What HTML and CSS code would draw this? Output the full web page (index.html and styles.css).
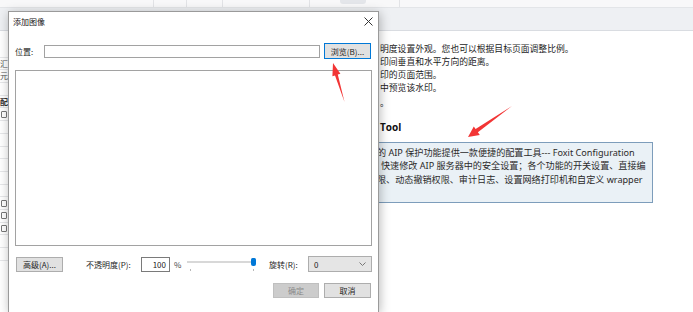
FILE: index.html
```html
<!DOCTYPE html>
<html lang="zh-CN">
<head>
    <meta charset="UTF-8">
    <meta name="viewport" content="width=device-width, initial-scale=1.0">
    <title>添加图像</title>
    <link rel="stylesheet" href="styles.css">
</head>
<body>
    <div class="app">
        <div class="topstrip">
            <span class="seg seg-a"></span>
            <span class="seg seg-b"></span>
            <span class="seg seg-c"></span>
            <span class="seg seg-d"></span>
            <span class="seg seg-e"><i class="pill"></i></span>
            <span class="seg seg-f"></span>
        </div>
        <div class="band"></div>
        <div class="workspace">
            <div class="sidepane">
                <div class="side-row"></div>
                <div class="side-row"><span class="side-glyph">汇</span></div>
                <div class="side-row"><span class="side-glyph">元…</span></div>
                <div class="side-row"></div>
                <div class="side-row"><span class="side-glyph bold">配</span></div>
                <div class="side-row"><span class="side-icon"></span></div>
                <div class="side-row"></div>
                <div class="side-row"></div>
                <div class="side-row"></div>
                <div class="side-row"></div>
                <div class="side-row"></div>
                <div class="side-row"></div>
                <div class="side-row"><span class="side-icon"></span></div>
                <div class="side-row"><span class="side-icon"></span></div>
                <div class="side-row"><span class="side-icon"></span></div>
                <div class="side-row"></div>
                <div class="side-row"></div>
            </div>
            <div class="page">
                <p class="line">明度设置外观。您也可以根据目标页面调整比例。</p>
                <p class="line">印间垂直和水平方向的距离。</p>
                <p class="line">印的页面范围。</p>
                <p class="line">中预览该水印。</p>
                <p class="line end">。</p>
                <h3 class="heading">Tool</h3>
                <div class="note">
                    <span class="note-line">的 AIP 保护功能提供一款便捷的配置工具--- Foxit Configuration</span>
                    <span class="note-line shift">快速修改 AIP 服务器中的安全设置；各个功能的开关设置、直接编</span>
                    <span class="note-line">限、动态撤销权限、审计日志、设置网络打印机和自定义 wrapper</span>
                </div>
            </div>
        </div>
    </div>

    <div class="dialog">
        <div class="dlg-title">
            <span>添加图像</span>
            <svg class="close" width="9" height="9" viewBox="0 0 9 9">
                <path d="M0.5 0.5 L8.5 8.5 M8.5 0.5 L0.5 8.5" stroke="#333" stroke-width="1" fill="none"/>
            </svg>
        </div>
        <div class="dlg-body">
            <div class="row loc-row">
                <label class="loc-label">位置:</label>
                <div class="field"></div>
                <button class="btn primary browse">浏览(B)...</button>
            </div>
            <div class="preview"></div>
            <div class="row opts-row">
                <button class="btn adv">高级(A)...</button>
                <label class="op-label">不透明度(P):</label>
                <div class="num">100</div>
                <span class="pct">%</span>
                <div class="slider">
                    <div class="track"></div>
                    <div class="thumb"></div>
                    <i class="tick tick-l"></i>
                    <i class="tick tick-r"></i>
                </div>
                <label class="rot-label">旋转(R):</label>
                <div class="select">
                    <span>0</span>
                    <svg width="7" height="4" viewBox="0 0 7 4">
                        <path d="M0.5 0.5 L3.5 3.5 L6.5 0.5" stroke="#777" stroke-width="1" fill="none"/>
                    </svg>
                </div>
            </div>
            <div class="row actions-row">
                <button class="btn disabled">确定</button>
                <button class="btn cancel">取消</button>
            </div>
        </div>
    </div>

    <svg class="marks" width="693" height="312" viewBox="0 0 693 312">
        <polygon points="344.5,102 337.8,74.6 340.4,73.8 333,63 332.4,76.2 335,75.4" fill="#f23535"/>
        <polygon points="512,106 477.9,132.3 479.8,135 468,137 473.8,126.6 475.6,129.1" fill="#f23535"/>
    </svg>
</body>
</html>
```

FILE: styles.css
```css
* {
    box-sizing: border-box;
    margin: 0;
    padding: 0;
}

body {
    width: 693px;
    height: 312px;
    overflow: hidden;
    position: relative;
    background-color: #fff;
    font-family: "Noto Sans CJK SC", "Noto Sans", sans-serif;
    color: #222;
}

/* background application */

.app {
    width: 693px;
    height: 312px;
    display: flex;
    flex-direction: column;
    overflow: hidden;
}

.topstrip {
    height: 8px;
    display: flex;
    background-color: #f8f8f9;
    border-bottom: 1px solid #e3e5e8;
}

.seg {
    height: 7px;
    border-right: 1px solid #e2e3e6;
    position: relative;
}

.seg-a { width: 154px; }
.seg-b { width: 33px; }
.seg-c { width: 36px; }
.seg-d { width: 87px; }
.seg-e { width: 90px; }
.seg-f { flex: 1; border-right: none; }

.pill {
    position: absolute;
    left: 30px;
    top: 0;
    width: 26px;
    height: 4px;
    background-color: #e4e6ea;
    border-radius: 0 0 3px 3px;
}

.band {
    height: 23px;
    background-color: #eef0f3;
    border-bottom: 1px solid #d9dce1;
}

.workspace {
    flex: 1;
    display: flex;
    overflow: hidden;
}

.sidepane {
    width: 120px;
    padding-top: 14px;
    border-right: 1px solid #e0e0e0;
}

.side-row {
    height: 12.7px;
    border-bottom: 1px solid #e6e7e9;
    display: flex;
    align-items: center;
}

.side-glyph {
    font-size: 8px;
    line-height: 1;
    color: #555;
    white-space: nowrap;
}

.side-glyph.bold {
    font-weight: bold;
    color: #333;
}

.side-icon {
    width: 6px;
    height: 7px;
    margin-left: 1px;
    border: 1px solid #777;
    border-radius: 1px;
}

.page {
    flex: 1;
    padding: 11px 0 0 260px;
    font-size: 8.8px;
    color: #1c1c1c;
}

.line {
    line-height: 13px;
    white-space: nowrap;
}

.line.end {
    margin-top: 2px;
}

.heading {
    margin-top: 11px;
    font-family: "Open Sans", "Noto Sans", sans-serif;
    font-size: 10px;
    font-weight: bold;
    line-height: 14px;
    color: #111;
}

.note {
    width: 353px;
    margin: 8px 0 0 -80px;
    padding: 2.5px 0 16px 76px;
    background-color: #eaf1f6;
    border: 1px solid #7d9dbb;
    font-family: "Noto Sans", "Noto Sans CJK SC", sans-serif;
    font-size: 9.1px;
    color: #2a2a2a;
}

.note-line {
    display: block;
    line-height: 13.5px;
    white-space: nowrap;
}

.note-line.shift {
    padding-left: 4px;
}

/* dialog window */

.dialog {
    position: absolute;
    left: 8px;
    top: 11px;
    width: 371px;
    height: 301px;
    background-color: #fff;
    border: 1px solid #9a9a9a;
    border-bottom: none;
    box-shadow: 1px 2px 10px rgba(0, 0, 0, 0.28);
    font-size: 8px;
}

.dlg-title {
    height: 18px;
    padding: 0 5px 0 4px;
    display: flex;
    justify-content: space-between;
    align-items: center;
    color: #111;
}

.dlg-body {
    padding: 13px 6px 0 6px;
}

.row {
    display: flex;
    align-items: center;
}

.loc-row {
    height: 16px;
}

.loc-label {
    width: 29px;
}

.field {
    flex: 1;
    height: 13px;
    border: 1px solid #a2a2a2;
}

.btn {
    height: 16px;
    font-family: inherit;
    font-size: 8px;
    color: #1e1e1e;
    background-color: #e1e1e1;
    border: 1px solid #adadad;
    display: flex;
    align-items: center;
    justify-content: center;
}

.browse {
    width: 47px;
    margin: 0 1px 0 4px;
}

.btn.primary {
    border-color: #0078d7;
}

.preview {
    height: 176px;
    margin-top: 11px;
    border: 1px solid #a2a2a2;
}

.opts-row {
    height: 16px;
    margin-top: 10px;
}

.adv {
    width: 47px;
    height: 15px;
    margin-left: 1px;
}

.op-label {
    width: 55px;
    margin-left: 23px;
}

.num {
    width: 29px;
    height: 15px;
    border: 1px solid #7a7a7a;
    text-align: right;
    padding-right: 3px;
    line-height: 13px;
}

.pct {
    width: 6px;
    margin-left: 4px;
    color: #444;
}

.slider {
    width: 71px;
    height: 16px;
    margin-left: 6px;
    position: relative;
}

.track {
    position: absolute;
    left: 1px;
    right: 2px;
    top: 5px;
    height: 2px;
    background-color: #d8d8d8;
}

.thumb {
    position: absolute;
    right: 1px;
    top: 2px;
    width: 5px;
    height: 8px;
    background-color: #0078d7;
    border-radius: 1.5px 1.5px 2px 2px;
}

.tick {
    position: absolute;
    top: 13px;
    width: 1px;
    height: 2px;
    background-color: #b8b8b8;
}

.tick-l { left: 4px; }
.tick-r { right: 3px; }

.rot-label {
    width: 39px;
    margin-left: 12px;
}

.select {
    flex: 1;
    height: 16px;
    padding: 0 5px 0 5px;
    background-color: #e5e5e5;
    border: 1px solid #adadad;
    display: flex;
    align-items: center;
    justify-content: space-between;
}

.actions-row {
    height: 15px;
    margin-top: 11px;
    justify-content: flex-end;
    gap: 5px;
}

.actions-row .btn {
    height: 15px;
}

.btn.disabled {
    width: 46px;
    background-color: #cccccc;
    border-color: #bfbfbf;
    color: #8a8a8a;
}

.btn.cancel {
    width: 47px;
    margin-right: 1px;
}

/* annotation arrows drawn over the screenshot */

.marks {
    position: absolute;
    left: 0;
    top: 0;
    pointer-events: none;
}
```
